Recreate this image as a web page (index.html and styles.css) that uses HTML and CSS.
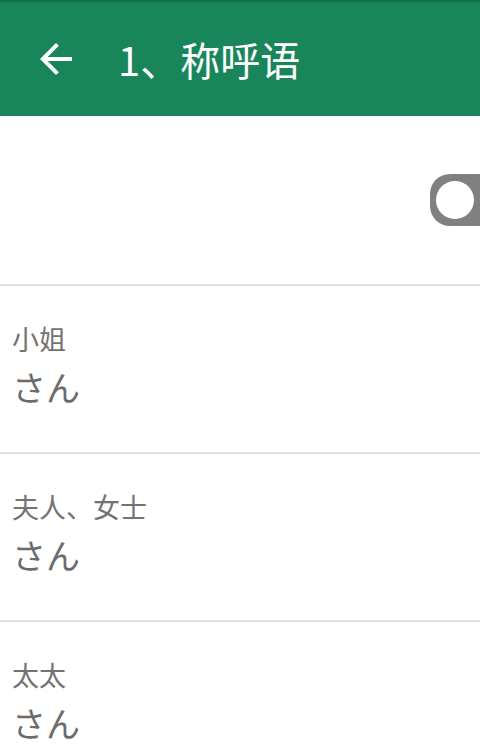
FILE: index.html
```html
<!DOCTYPE html>
<html lang="zh">
<head>
<meta charset="utf-8">
<link rel="stylesheet" href="styles.css">
</head>
<body>
<header class="toolbar">
  <svg class="back" viewBox="0 0 24 24" width="48" height="48"><path fill="#fff" d="M20 11H7.83l5.59-5.59L12 4l-8 8 8 8 1.41-1.41L7.83 13H20v-2z"/></svg>
  <h1 class="title">1、称呼语</h1>
</header>
<main>
  <div class="switch-row">
    <div class="toggle"><span class="knob"></span></div>
  </div>
  <div class="item">
    <div class="label">小姐</div>
    <div class="value">さん</div>
  </div>
  <div class="item">
    <div class="label">夫人、女士</div>
    <div class="value">さん</div>
  </div>
  <div class="item">
    <div class="label">太太</div>
    <div class="value">さん</div>
  </div>
</main>
</body>
</html>
```
FILE: styles.css
```css
html, body {
  margin: 0;
  padding: 0;
  background: #fff;
  font-family: "Noto Sans CJK SC", "Noto Sans", sans-serif;
  overflow: hidden;
}
.toolbar {
  height: 116px;
  background: #19855b;
  border-top: 2px solid #137048;
  box-sizing: border-box;
  display: flex;
  align-items: center;
}
.back {
  margin-left: 32px;
  flex: none;
}
.title {
  margin: 0 0 0 38px;
  color: #fff;
  font-size: 40px;
  font-weight: 400;
  line-height: 1;
}
.switch-row {
  height: 170px;
  box-sizing: border-box;
  border-bottom: 2px solid #e2e2e2;
  display: flex;
  align-items: center;
  justify-content: flex-end;
}
.toggle {
  width: 50px;
  height: 52px;
  box-sizing: border-box;
  background: #808080;
  border-radius: 20px 0 0 20px;
  display: flex;
  align-items: center;
  padding-left: 6px;
}
.knob {
  width: 38px;
  height: 38px;
  border-radius: 50%;
  background: #fff;
}
.item {
  height: 168px;
  box-sizing: border-box;
  border-bottom: 2px solid #e2e2e2;
  padding: 35px 12px 0;
}
.label {
  font-size: 27px;
  line-height: 35px;
  color: #737373;
  margin-bottom: 9px;
}
.value {
  font-size: 34px;
  line-height: 44px;
  color: #6b6b6b;
}
```
